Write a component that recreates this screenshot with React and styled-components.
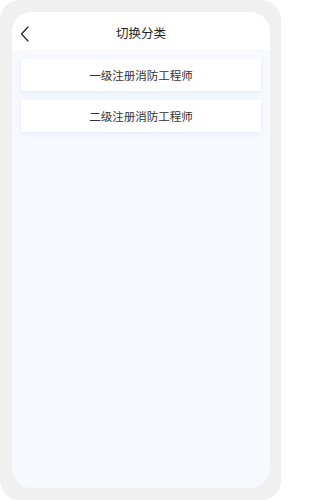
import React from 'react';
import styled, { createGlobalStyle } from 'styled-components';

const GlobalStyle = createGlobalStyle`
  html, body {
    margin: 0;
    padding: 0;
    background: #ffffff;
    font-family: "Noto Sans CJK SC", "Noto Sans", sans-serif;
  }
`;

const Frame = styled.div`
  box-sizing: border-box;
  width: 281px;
  height: 500px;
  padding: 12px 11px 12px 12px;
  background: #f0f0f0;
  border-radius: 20px;
  display: flex;
`;

const Screen = styled.div`
  flex: 1;
  display: flex;
  flex-direction: column;
  background: #f8f9fe;
  border-radius: 20px;
  overflow: hidden;
`;

const Header = styled.div`
  position: relative;
  height: 38px;
  background: #ffffff;
  display: flex;
  align-items: center;
  justify-content: center;
  flex-shrink: 0;
`;

const BackButton = styled.button`
  position: absolute;
  left: 8px;
  top: 14px;
  padding: 0;
  border: 0;
  background: none;
  display: flex;
`;

const Title = styled.div`
  font-size: 12.5px;
  color: #1f1f1f;
  line-height: 1;
  margin-top: 5px;
`;

const List = styled.div`
  display: flex;
  flex-direction: column;
  gap: 9px;
  padding: 9px;
`;

const Item = styled.div`
  height: 32px;
  background: #ffffff;
  display: flex;
  align-items: center;
  justify-content: center;
  font-size: 11.5px;
  color: #333333;
  box-shadow: 0 2px 5px rgba(214, 226, 246, 0.55);
`;

const categories = ['一级注册消防工程师', '二级注册消防工程师'];

const App = () => {
  return (
    <>
      <GlobalStyle />
      <Frame>
        <Screen>
          <Header>
            <BackButton>
              <svg width="9" height="16" viewBox="0 0 9 16">
                <path d="M8 1 L1.5 8 L8 15" fill="none" stroke="#222" strokeWidth="1.2" strokeLinecap="round" strokeLinejoin="round" />
              </svg>
            </BackButton>
            <Title>切换分类</Title>
          </Header>
          <List>
            {categories.map((c) => (
              <Item key={c}>{c}</Item>
            ))}
          </List>
        </Screen>
      </Frame>
    </>
  );
};

export default App;
